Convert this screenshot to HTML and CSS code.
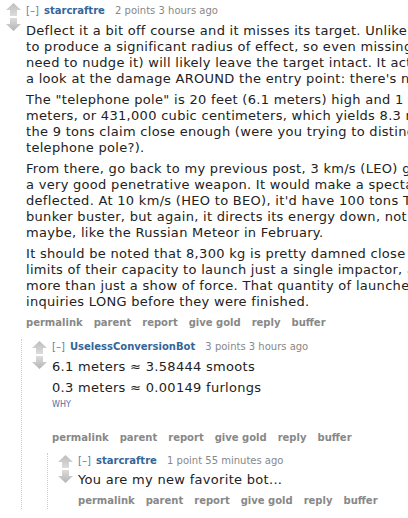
FILE: index.html
```html
<!DOCTYPE html>
<html lang="en">
<head>
<meta charset="utf-8">
<title>Comments</title>
<link rel="stylesheet" href="styles.css">
</head>
<body>
<div class="thread">
  <div class="comment">
    <div class="row">
      <div class="midcol">
        <svg class="arrow" width="15" height="14" viewBox="0 0 15 14"><defs><linearGradient id="gu" x1="0" y1="0" x2="0" y2="1"><stop offset="0" stop-color="#bdbdbd"/><stop offset="1" stop-color="#dcdcdc"/></linearGradient></defs><polygon points="7.5,0 15,7 11,7 11,13 4,13 4,7 0,7" fill="url(#gu)"/></svg>
        <svg class="arrow" width="15" height="14" viewBox="0 0 15 14"><defs><linearGradient id="gd" x1="0" y1="0" x2="0" y2="1"><stop offset="0" stop-color="#dcdcdc"/><stop offset="1" stop-color="#b4b4b4"/></linearGradient></defs><polygon points="4,0 11,0 11,6 15,6 7.5,13 0,6 4,6" fill="url(#gd)"/></svg>
      </div>
      <div class="entry">
        <p class="tagline"><a class="expand">[–]</a> <a class="author">starcraftre</a> <span class="score">2 points</span> <time>3 hours ago</time></p>
        <div class="md">
          <p>Deflect it a bit off course and it misses its target. Unlike a nuke, it doesn't<br>to produce a significant radius of effect, so even missing by a few meters (all you<br>need to nudge it) will likely leave the target intact. It actually buries itself; take<br>a look at the damage AROUND the entry point: there's next to nothing.</p>
          <p>The "telephone pole" is 20 feet (6.1 meters) high and 1 foot (0.3 meters) across: 1.4 cubic<br>meters, or 431,000 cubic centimeters, which yields 8.3 metric tons of tungsten. I'd call<br>the 9 tons claim close enough (were you trying to distinguish between tungsten and a<br>telephone pole?).</p>
          <p>From there, go back to my previous post, 3 km/s (LEO) gives you about 9 tons TNT, which is<br>a very good penetrative weapon. It would make a spectacular hole, provided it isn't<br>deflected. At 10 km/s (HEO to BEO), it'd have 100 tons TNT equivalent. That's a great<br>bunker buster, but again, it directs its energy down, not out. It would look,<br>maybe, like the Russian Meteor in February.</p>
          <p>It should be noted that 8,300 kg is pretty damned close to the upper<br>limits of their capacity to launch just a single impactor, and an arsenal would be<br>more than just a show of force. That quantity of launches would have triggered<br>inquiries LONG before they were finished.</p>
        </div>
        <ul class="buttons"><li>permalink</li><li>parent</li><li>report</li><li>give gold</li><li>reply</li><li>buffer</li></ul>
      </div>
    </div>
    <div class="child">
      <div class="comment">
        <div class="row">
          <div class="midcol">
            <svg class="arrow" width="15" height="14" viewBox="0 0 15 14"><polygon points="7.5,0 15,7 11,7 11,13 4,13 4,7 0,7" fill="url(#gu)"/></svg>
            <svg class="arrow" width="15" height="14" viewBox="0 0 15 14"><polygon points="4,0 11,0 11,6 15,6 7.5,13 0,6 4,6" fill="url(#gd)"/></svg>
          </div>
          <div class="entry">
            <p class="tagline"><a class="expand">[–]</a> <a class="author">UselessConversionBot</a> <span class="score">3 points</span> <time>3 hours ago</time></p>
            <div class="md">
              <p>6.1 meters ≈ 3.58444 smoots</p>
              <p>0.3 meters ≈ 0.00149 furlongs</p>
              <p class="why"><a>WHY</a></p>
            </div>
            <ul class="buttons bot"><li>permalink</li><li>parent</li><li>report</li><li>give gold</li><li>reply</li><li>buffer</li></ul>
          </div>
        </div>
        <div class="child">
          <div class="comment">
            <div class="row">
              <div class="midcol">
                <svg class="arrow" width="15" height="14" viewBox="0 0 15 14"><polygon points="7.5,0 15,7 11,7 11,13 4,13 4,7 0,7" fill="url(#gu)"/></svg>
                <svg class="arrow" width="15" height="14" viewBox="0 0 15 14"><polygon points="4,0 11,0 11,6 15,6 7.5,13 0,6 4,6" fill="url(#gd)"/></svg>
              </div>
              <div class="entry">
                <p class="tagline"><a class="expand">[–]</a> <a class="author">starcraftre</a> <span class="score">1 point</span> <time>55 minutes ago</time></p>
                <div class="md">
                  <p>You are my new favorite bot...</p>
                </div>
                <ul class="buttons"><li>permalink</li><li>parent</li><li>report</li><li>give gold</li><li>reply</li><li>buffer</li></ul>
              </div>
            </div>
          </div>
        </div>
      </div>
    </div>
  </div>
</div>
</body>
</html>
```

FILE: styles.css
```css
html, body {
  margin: 0;
  padding: 0;
  background: #ffffff;
  overflow: hidden;
}

body {
  font-family: "DejaVu Sans", Verdana, sans-serif;
}

.thread {
  padding-left: 6px;
}

.row {
  display: flex;
  align-items: flex-start;
}

.midcol {
  flex: none;
  width: 15px;
  margin-right: 5px;
  padding-top: 3px;
  display: flex;
  flex-direction: column;
  gap: 1px;
}

.child .midcol {
  padding-top: 2px;
}

.arrow {
  display: block;
}

.entry {
  flex: 1;
  min-width: 0;
}

.tagline {
  margin: 5px 0 0;
  font-size: 10px;
  line-height: 12px;
  color: #888888;
  white-space: nowrap;
}

.child .tagline {
  margin-top: 2px;
}

.expand {
  color: #5a7fae;
  margin-right: 2px;
}

.author {
  color: #336699;
  font-weight: bold;
  margin-right: 7px;
}

.md {
  margin-top: 6px;
  font-size: 13px;
  line-height: 16px;
  letter-spacing: 0.3px;
  color: #222222;
}

.md p {
  margin: 0 0 5px;
  white-space: nowrap;
}

.md .why {
  font-size: 8px;
  line-height: 10px;
  letter-spacing: 0;
  margin-top: -1px;
}

.why a {
  color: #4a73a8;
}

.buttons {
  list-style: none;
  margin: 0;
  padding: 0;
  display: flex;
  gap: 11px;
  font-size: 10px;
  font-weight: bold;
  line-height: 16px;
  color: #888888;
  white-space: nowrap;
}

.buttons.bot {
  margin-top: 20px;
}

.child {
  margin-left: 15px;
  margin-top: 8px;
  padding-left: 10px;
  border-left: 1px dotted #c9c9e0;
}

.child .child {
  margin-top: 7px;
}

.child .child .md {
  margin-top: 5px;
}
```
